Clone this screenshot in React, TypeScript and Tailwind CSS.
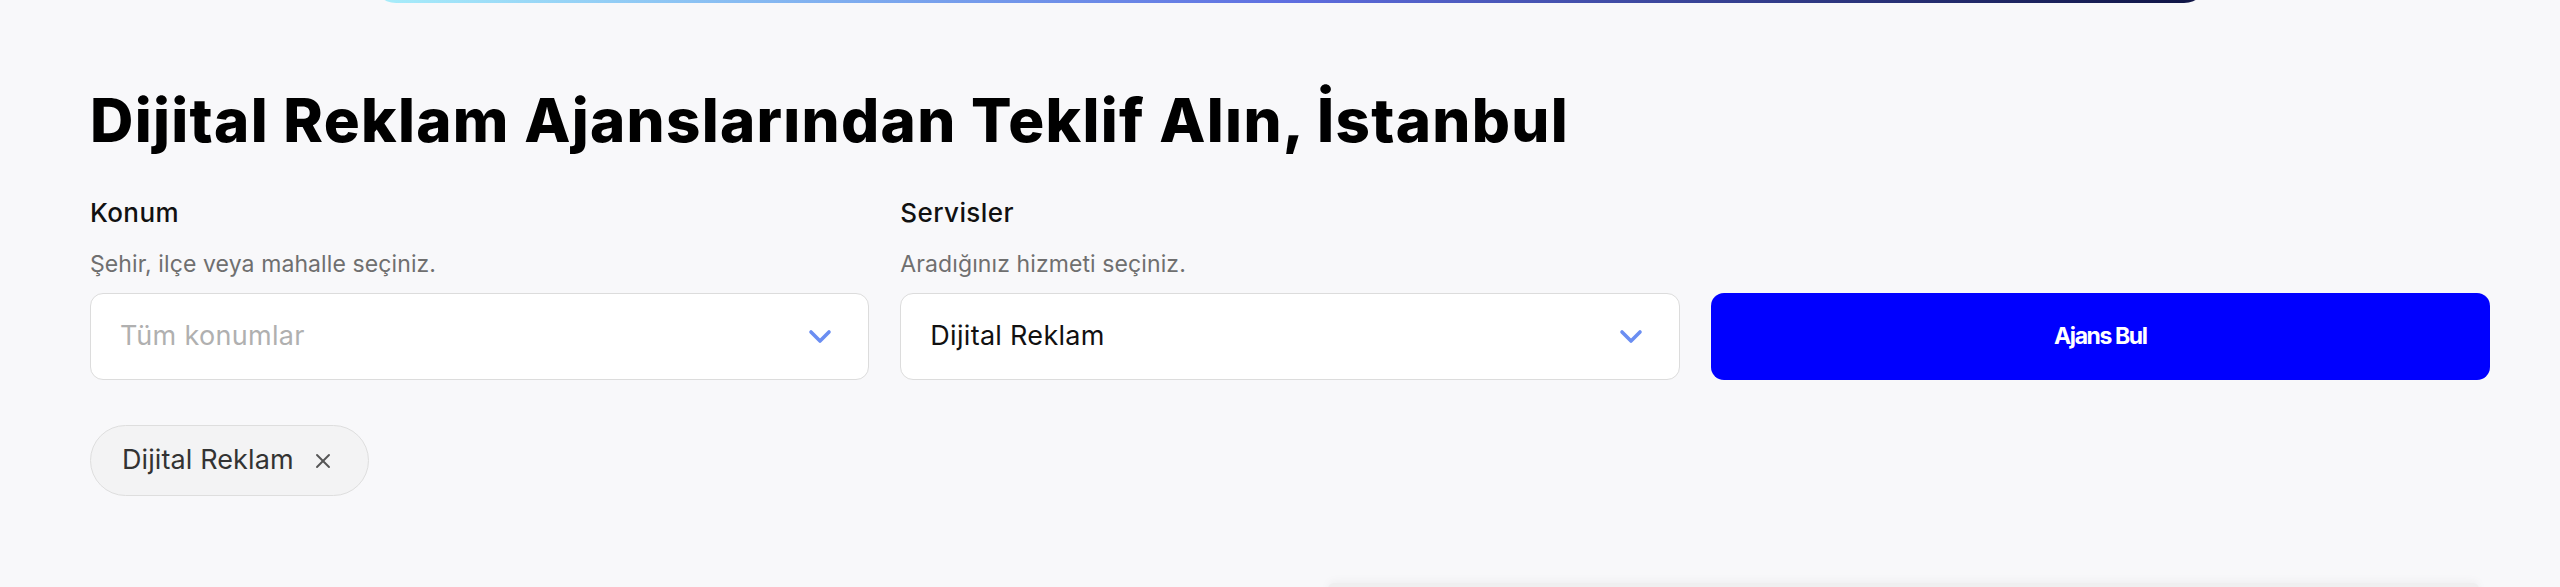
import { X } from 'lucide-react'

const font = { fontFamily: 'Inter, "Noto Sans", sans-serif' }

function Chevron() {
  return (
    <svg width="24" height="15" viewBox="0 0 24 15" fill="none" className="shrink-0">
      <path d="M3 3 L12 12 L21 3" stroke="#6b8ef2" strokeWidth="3.6" strokeLinecap="round" strokeLinejoin="round" />
    </svg>
  )
}

function Field({ label, hint, value, placeholder }: { label: string; hint: string; value?: string; placeholder: string }) {
  return (
    <div className="flex flex-col">
      <label className="mt-[44px] text-[26px] leading-[26px] font-medium tracking-[0.4px] text-[#111111]">{label}</label>
      <p className="mt-[27px] text-[23px] leading-[23px] tracking-[0.1px] text-[#6f6f6f]">{hint}</p>
      <button className="mt-[17px] flex h-[87px] items-center justify-between rounded-[13px] border-[1.6px] border-[#dcdcdc] bg-white pl-[29px] pr-[36px] text-left">
        <span className={value ? 'text-[27px] tracking-[0.3px] text-[#111111]' : 'text-[27px] tracking-[0.3px] text-[#b0b0b0]'}>
          {value ?? placeholder}
        </span>
        <Chevron />
      </button>
    </div>
  )
}

export default function App() {
  return (
    <div className="min-h-[587px] w-full overflow-hidden bg-[#f8f8fa]" style={font}>
      {/* hero card bottom edge peeking in */}
      <div className="flex h-[3px] w-[1836px] items-end overflow-hidden" style={{ marginLeft: 372 }}>
        <div className="h-[40px] w-full shrink-0 rounded-b-[24px] bg-gradient-to-r from-[#a8eefa] via-[#5f6ee0] to-[#0f1444]" />
      </div>

      <div className="w-[2400px] pl-[90px] box-content">
        <h1 className="mt-[81px] text-[60px] leading-[72px] font-extrabold tracking-[1.3px] text-black">
          Dijital Reklam Ajanslarından Teklif Alın, İstanbul
        </h1>

        <div className="grid grid-cols-3 gap-x-[31px]">
          <Field label="Konum" hint="Şehir, ilçe veya mahalle seçiniz." placeholder="Tüm konumlar" />
          <Field label="Servisler" hint="Aradığınız hizmeti seçiniz." value="Dijital Reklam" placeholder="Tüm servisler" />
          <div className="flex flex-col justify-end">
            <button className="h-[87px] rounded-[13px] bg-[#0000ff] text-[23px] font-bold tracking-[-1.4px] text-white">
              Ajans Bul
            </button>
          </div>
        </div>

        <div className="mt-[45px] flex">
          <div className="flex h-[71px] items-center gap-[17px] rounded-full border-[1.6px] border-[#dedede] bg-[#f3f3f4] pl-[31px] pr-[33px]">
            <span className="text-[27px] tracking-[0.1px] text-[#333333]">Dijital Reklam</span>
            <X size={24} strokeWidth={1.9} color="#555555" />
          </div>
        </div>
      </div>

      {/* next card starting at the bottom */}
      <div className="mt-[87px] flex pl-[1328px]">
        <div className="h-[30px] w-[1151px] rounded-t-[6px] bg-[#efeff0] shadow-[0_-2px_10px_rgba(0,0,0,0.04)]" />
      </div>
    </div>
  )
}
